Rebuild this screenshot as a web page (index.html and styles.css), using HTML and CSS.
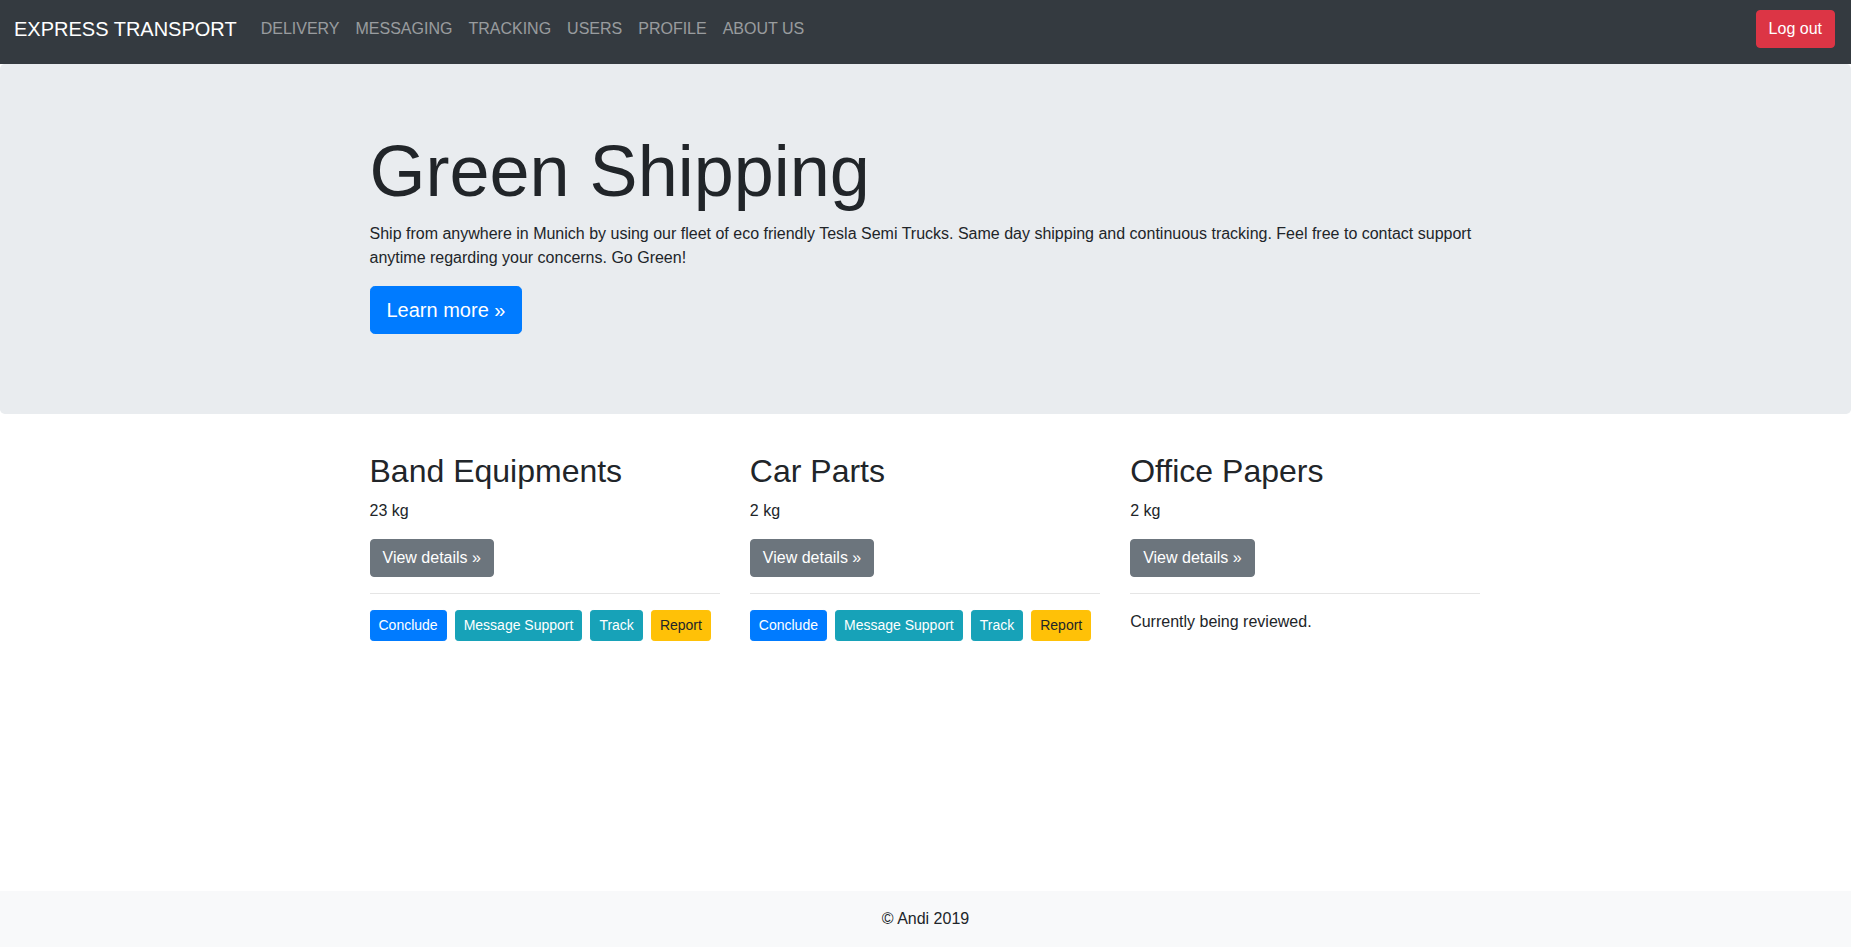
FILE: index.html
```html
<!DOCTYPE html>
<html lang="en">
<head>
<meta charset="utf-8">
<title>Express Transport</title>
<link rel="stylesheet" href="styles.css">
</head>
<body>
<nav class="navbar">
  <a class="brand" href="#">EXPRESS TRANSPORT</a>
  <ul class="nav-links">
    <li><a href="#">DELIVERY</a></li>
    <li><a href="#">MESSAGING</a></li>
    <li><a href="#">TRACKING</a></li>
    <li><a href="#">USERS</a></li>
    <li><a href="#">PROFILE</a></li>
    <li><a href="#">ABOUT US</a></li>
  </ul>
  <button class="btn btn-danger">Log out</button>
</nav>
<main class="main">
  <section class="jumbotron">
    <div class="container">
      <h1 class="display">Green Shipping</h1>
      <p>Ship from anywhere in Munich by using our fleet of eco friendly Tesla Semi Trucks. Same day shipping and continuous tracking. Feel free to contact support anytime regarding your concerns. Go Green!</p>
      <p><a class="btn btn-primary btn-lg" href="#">Learn more »</a></p>
    </div>
  </section>
  <div class="container">
    <div class="row">
      <div class="col">
        <h2>Band Equipments</h2>
        <p>23 kg</p>
        <p><a class="btn btn-secondary" href="#">View details »</a></p>
        <hr>
        <div class="actions">
          <a class="btn btn-sm btn-primary" href="#">Conclude</a>
          <a class="btn btn-sm btn-info" href="#">Message Support</a>
          <a class="btn btn-sm btn-info" href="#">Track</a>
          <a class="btn btn-sm btn-warning" href="#">Report</a>
        </div>
      </div>
      <div class="col">
        <h2>Car Parts</h2>
        <p>2 kg</p>
        <p><a class="btn btn-secondary" href="#">View details »</a></p>
        <hr>
        <div class="actions">
          <a class="btn btn-sm btn-primary" href="#">Conclude</a>
          <a class="btn btn-sm btn-info" href="#">Message Support</a>
          <a class="btn btn-sm btn-info" href="#">Track</a>
          <a class="btn btn-sm btn-warning" href="#">Report</a>
        </div>
      </div>
      <div class="col">
        <h2>Office Papers</h2>
        <p>2 kg</p>
        <p><a class="btn btn-secondary" href="#">View details »</a></p>
        <hr>
        <p>Currently being reviewed.</p>
      </div>
    </div>
  </div>
</main>
<footer class="footer">© Andi 2019</footer>
</body>
</html>
```
FILE: styles.css
```css
* { box-sizing: border-box; }
html, body { margin: 0; padding: 0; }
body {
  font-family: "Liberation Sans", Arial, sans-serif;
  font-size: 16px;
  line-height: 1.5;
  color: #212529;
  background: #fff;
  min-height: 100vh;
  display: flex;
  flex-direction: column;
}
a { text-decoration: none; }
p { margin: 0 0 16px; }
h1, h2 { margin: 0 0 8px; font-weight: 500; line-height: 1.2; }

.navbar {
  background: #343a40;
  height: 64px;
  padding: 9px 16px 15px 14px;
  display: flex;
  align-items: center;
}
.brand {
  color: #fff;
  font-size: 20px;
  line-height: 30px;
  padding: 5px 0;
  margin-right: 16px;
  white-space: nowrap;
}
.nav-links {
  list-style: none;
  margin: 0;
  padding: 0;
  display: flex;
  flex: 1;
}
.nav-links a {
  display: block;
  padding: 8px;
  color: rgba(255,255,255,.5);
}

.btn {
  display: inline-block;
  font-family: inherit;
  font-size: 16px;
  line-height: 1.5;
  padding: 6px 12px;
  border: 1px solid transparent;
  border-radius: 4px;
  color: #fff;
  cursor: pointer;
  white-space: nowrap;
}
.btn-lg { font-size: 20px; padding: 8px 16px; border-radius: 4.8px; }
.btn-sm { font-size: 14px; padding: 4px 8px; border-radius: 3.2px; }
.btn-danger { background: #dc3545; border-color: #dc3545; }
.btn-primary { background: #007bff; border-color: #007bff; }
.btn-secondary { background: #6c757d; border-color: #6c757d; }
.btn-info { background: #17a2b8; border-color: #17a2b8; }
.btn-warning { background: #ffc107; border-color: #ffc107; color: #212529; }

.main { flex: 1; }
.jumbotron {
  background: #e9ecef;
  padding: 64px 32px;
  margin-bottom: 38px;
  border-radius: 4.8px;
}
.container {
  width: 1140px;
  margin: 0 auto;
  padding: 0 15px 0 14px;
}
.jumbotron .display {
  font-size: 72px;
  font-weight: 300;
  line-height: 1.2;
  margin-bottom: 8px;
}
.row {
  display: flex;
  margin: 0 -15px;
}
.col {
  width: 33.3333%;
  padding: 0 15px;
}
.col h2 { font-size: 32px; }
hr {
  margin: 16px 0;
  border: 0;
  border-top: 1px solid rgba(0,0,0,.1);
}
.actions {
  display: flex;
  gap: 8px;
}

.footer {
  background: #f8f9fa;
  height: 56px;
  display: flex;
  align-items: center;
  justify-content: center;
}
```
